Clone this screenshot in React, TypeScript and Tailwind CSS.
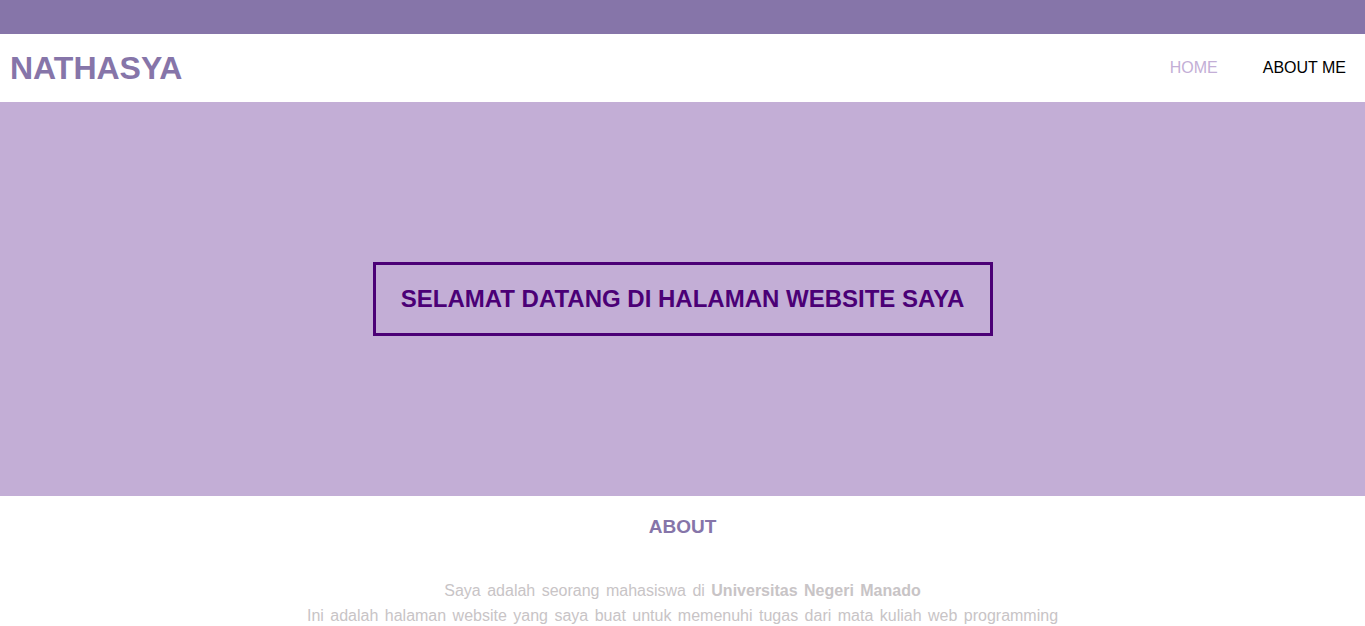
export default function App() {
  return (
    <div className="min-h-screen bg-white" style={{ fontFamily: '"Liberation Sans", Arial, sans-serif' }}>
      <div className="h-[34px] bg-[#8675a9]" />

      <nav className="h-[68px] flex items-center justify-between pl-[10px] pr-[19px]">
        <h1 className="text-[32px] font-bold text-[#8675a9] leading-none">NATHASYA</h1>
        <ul className="flex items-center gap-[45px] text-[16px]">
          <li className="text-[#c3aed6]">HOME</li>
          <li className="text-black">ABOUT ME</li>
        </ul>
      </nav>

      <section className="h-[394px] bg-[#c3aed6] flex items-center justify-center">
        <div className="border-[3px] border-[#4b0076] w-[620px] h-[74px] flex items-center justify-center">
          <h2 className="text-[24px] font-bold text-[#4b0076]">SELAMAT DATANG DI HALAMAN WEBSITE SAYA</h2>
        </div>
      </section>

      <section className="text-center">
        <h3 className="pt-[17px] text-[19px] font-bold text-[#8675a9]">ABOUT</h3>
        <div className="mt-[36px] text-[16px] leading-[25px] text-[#c8c4c6] [word-spacing:2px]">
          <p>
            Saya adalah seorang mahasiswa di <b>Universitas Negeri Manado</b>
          </p>
          <p>Ini adalah halaman website yang saya buat untuk memenuhi tugas dari mata kuliah web programming</p>
        </div>
      </section>
    </div>
  );
}
